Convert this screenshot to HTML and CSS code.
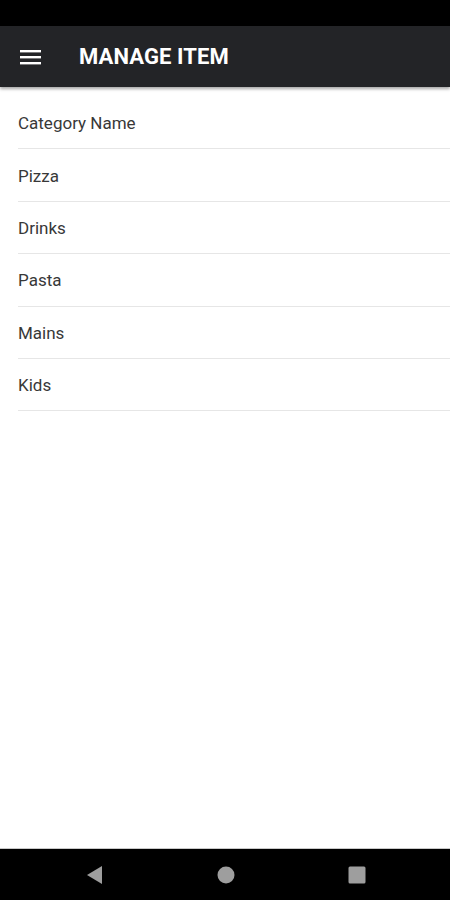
FILE: index.html
```html
<!DOCTYPE html>
<html>
  <head>
    <title>Manage Item</title>
    <link rel="stylesheet" href="styles.css">
  </head>
  <body>
    <div class="status-bar"></div>

    <header class="toolbar">
      <button class="menu-btn" aria-label="Menu">
        <svg width="22" height="16" viewBox="0 0 22 16">
          <rect x="0" y="1" width="21" height="2.4" fill="#fff" />
          <rect x="0" y="7" width="21" height="2.4" fill="#fff" />
          <rect x="0" y="13" width="21" height="2.4" fill="#fff" />
        </svg>
      </button>
      <h1>MANAGE ITEM</h1>
    </header>

    <main class="content">
      <ul class="category-list">
        <li>Category Name</li>
        <li>Pizza</li>
        <li>Drinks</li>
        <li>Pasta</li>
        <li>Mains</li>
        <li>Kids</li>
      </ul>
    </main>

    <nav class="nav-bar">
      <svg class="nav-icon" width="16" height="18" viewBox="0 0 16 18">
        <polygon points="15,0 15,18 0,9" fill="#9e9e9e" />
      </svg>
      <svg class="nav-icon" width="18" height="18" viewBox="0 0 18 18">
        <circle cx="9" cy="9" r="8.5" fill="#9e9e9e" />
      </svg>
      <svg class="nav-icon" width="18" height="18" viewBox="0 0 18 18">
        <rect x="0.5" y="0.5" width="17" height="17" rx="1.5" fill="#9e9e9e" />
      </svg>
    </nav>
  </body>
</html>
```

FILE: styles.css
```css
* {
  box-sizing: border-box;
}

html,
body {
  height: 100%;
}

body {
  margin: 0;
  font-family: Roboto, "Noto Sans", sans-serif;
  background: #fff;
  color: #333;
  display: flex;
  flex-direction: column;
}

.status-bar {
  height: 26px;
  background: #000;
  flex-shrink: 0;
}

.toolbar {
  height: 61px;
  background: #232427;
  display: flex;
  align-items: center;
  padding-left: 20px;
  box-shadow: 0 2px 3px rgba(0, 0, 0, 0.35);
  position: relative;
  z-index: 1;
  flex-shrink: 0;
}

.menu-btn {
  background: none;
  border: none;
  padding: 0;
  width: 22px;
  height: 16px;
  display: flex;
  margin-right: 37px;
  margin-top: 1px;
}

.toolbar h1 {
  margin: 0;
  color: #fff;
  font-size: 22px;
  font-weight: 700;
  letter-spacing: 0.1px;
}

.content {
  flex: 1;
  padding-top: 10px;
}

.category-list {
  list-style: none;
  margin: 0 0 0 18px;
  padding: 0;
}

.category-list li {
  height: 52.4px;
  display: flex;
  align-items: center;
  font-size: 17px;
  color: #383838;
  border-bottom: 1px solid #e6e6e6;
  padding-top: 1px;
}

.nav-bar {
  height: 52px;
  background: #000;
  border-top: 1px solid #c8c8c8;
  display: flex;
  align-items: center;
  flex-shrink: 0;
}

.nav-icon:nth-child(1) {
  margin-left: 87px;
}

.nav-icon:nth-child(2) {
  margin-left: 114px;
}

.nav-icon:nth-child(3) {
  margin-left: 113px;
}
```
